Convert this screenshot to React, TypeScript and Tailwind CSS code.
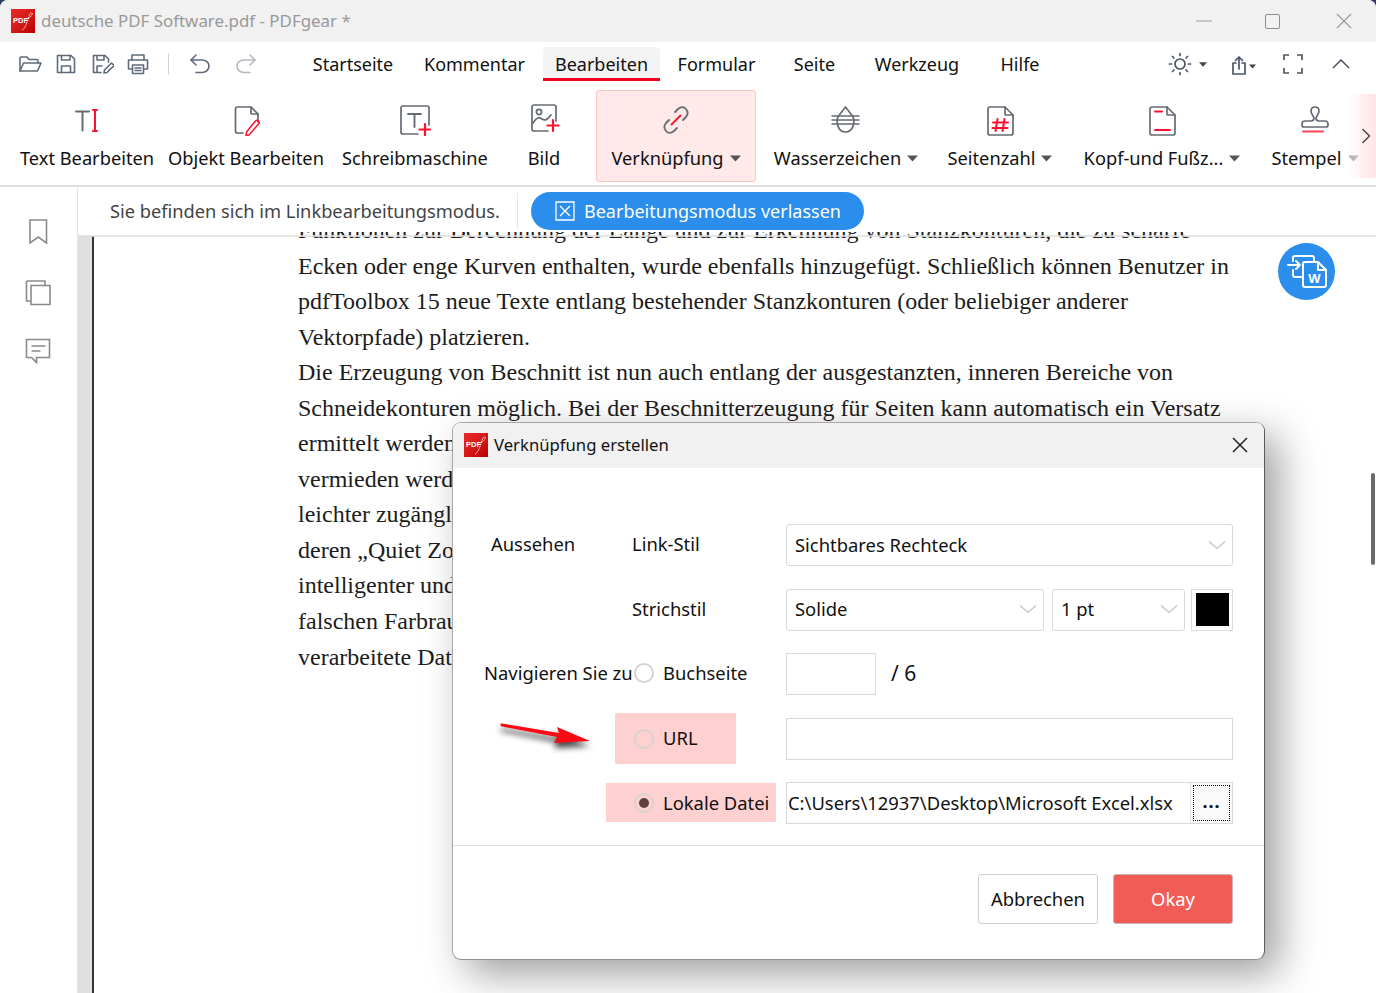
import React from "react";

const G = "#666b73";
const B = "#5f6b7a";
const R = "#ff1030";

function Logo() {
  return (
    <div className="relative w-[24px] h-[24px] shrink-0 bg-gradient-to-br from-[#ee2a2a] to-[#bb0000] overflow-hidden">
      <span className="absolute left-[2px] top-[7px] text-[7.500px] leading-[9px] font-bold text-white font-['Liberation_Sans',sans-serif]">PDF</span>
      <svg className="absolute inset-0" width="24" height="24" viewBox="0 0 24 24" fill="none" stroke="#fff" strokeWidth="0.8">
        <path d="M11 21C14 20 16 14 18 7c.6-2 2-4 3-3s-1 4-3 5-4 1-5 1" strokeDasharray="2 0.6" />
      </svg>
    </div>
  );
}

function Caret({ color = "#555", w = 11 }: { color?: string; w?: number }) {
  return (
    <svg width={w} height="7" viewBox="0 0 11 7" className="shrink-0">
      <path d="M0 0.5h11L5.5 6.5z" fill={color} />
    </svg>
  );
}

function Tool({ children, w = 24 }: { children: React.ReactNode; w?: number }) {
  return (
    <svg width={w} height="24" viewBox={`0 0 ${w} 24`} fill="none" stroke={B} strokeWidth="1.6" strokeLinejoin="round" strokeLinecap="round" className="shrink-0">
      {children}
    </svg>
  );
}

function RibbonIcon({ children }: { children: React.ReactNode }) {
  return (
    <svg width="32" height="32" viewBox="0 0 32 32" fill="none" stroke={G} strokeWidth="1.7" strokeLinejoin="round" strokeLinecap="round" className="shrink-0">
      {children}
    </svg>
  );
}

const icons = {
  text: (
    <>
      <path d="M5 7.500h13M11.500 7.500v19" strokeWidth="2" />
      <path d="M24 6v21M22 6h4M22 27h4" stroke={R} strokeWidth="2" />
    </>
  ),
  object: (
    <>
      <path d="M13 29H7.500a2 2 0 0 1-2-2V5a2 2 0 0 1 2-2H21l7 7v8" />
      <path d="M21 3v6a1 1 0 0 0 1 1h6" />
      <path d="M19 31l-3 .5.5-3.500 9-11c1-1 2-1 3 0s1 2 0 3z" stroke={R} strokeWidth="1.500" />
    </>
  ),
  type: (
    <>
      <path d="M19 30H4a2 2 0 0 1-2-2V4a2 2 0 0 1 2-2h24a2 2 0 0 1 2 2v17" />
      <path d="M9 10h13M15.500 10v13" strokeWidth="1.900" />
      <path d="M26 20v11M20.500 25.500H31" stroke={R} strokeWidth="2.200" />
    </>
  ),
  image: (
    <>
      <path d="M20 27H6a2 2 0 0 1-2-2V3a2 2 0 0 1 2-2h20a2 2 0 0 1 2 2v14" />
      <circle cx="11" cy="8" r="2.600" />
      <path d="M5 19c4-6 6-6 9-4s5 1 9-4" />
      <path d="M25 16v11M19.500 21.500h11" stroke={R} strokeWidth="2.200" />
    </>
  ),
  link: (
    <>
      <path d="M15 8l3-3c3-2.600 6-2.400 8 0s2.400 5 0 8l-3 3" strokeWidth="1.800" />
      <path d="M17 24l-3 3c-3 2.600-6 2.400-8 0s-2.400-5 0-8l3-3" strokeWidth="1.800" />
      <path d="M11.500 20.500l9-9" stroke={R} strokeWidth="1.800" />
    </>
  ),
  water: (
    <>
      <path d="M2 12h27M2 16h27M2 20h27" strokeWidth="1.500" />
      <path d="M15.500 3l-7 9c-3 5-1 16 7 16s10-11 7-16z" strokeWidth="1.700" />
    </>
  ),
  pagenum: (
    <>
      <path d="M6 3h15l8 8v18a2 2 0 0 1-2 2H6a2 2 0 0 1-2-2V5a2 2 0 0 1 2-2z" />
      <path d="M21 3v7a1 1 0 0 0 1 1h7" />
      <path d="M13.500 15l-2 12M20.500 15l-2 12M9 18.500h15M8.500 24h15" stroke={R} strokeWidth="2" />
    </>
  ),
  header: (
    <>
      <path d="M6 3h15l8 8v18a2 2 0 0 1-2 2H6a2 2 0 0 1-2-2V5a2 2 0 0 1 2-2z" />
      <path d="M21 3v7a1 1 0 0 0 1 1h7" />
      <path d="M9 7.500h7M9 26h15" stroke={R} strokeWidth="2" />
    </>
  ),
  stamp: (
    <>
      <path d="M3 20c0-2 1-3 3-3h6c2 0 3-1 3-3-1-3-3-4-3-7 0-3 2-4 4-4s4 1 4 4c0 3-2 4-3 7 0 2 1 3 3 3h6c2 0 3 1 3 3v1c0 1-1 2-2 2H5c-1 0-2-1-2-2z" />
      <path d="M4 27.500h20" stroke={R} strokeWidth="2" opacity="0.8" />
    </>
  ),
};

type RibbonItem = { label: string; w: string; icon: React.ReactNode; caret?: boolean; faint?: boolean };

function RibbonButton({ item }: { item: RibbonItem }) {
  return (
    <div className={`${item.w} h-[92px] shrink-0 flex flex-col items-center pt-[14px]`}>
      <RibbonIcon>{item.icon}</RibbonIcon>
      <div className="mt-[10px] h-[24px] flex items-center gap-[6px] whitespace-nowrap text-[18.250px] leading-[24px] text-[#111]">
        <span>{item.label}</span>
        {item.caret && <Caret color={item.faint ? "#aaa" : "#555"} />}
      </div>
    </div>
  );
}

function Chevron() {
  return (
    <svg width="18" height="10" viewBox="0 0 18 10" fill="none" stroke="#c4c4c4" strokeWidth="1.300" className="shrink-0">
      <path d="M1 1.500l8 7 8-7" />
    </svg>
  );
}

function Select({ label, className }: { label: string; className: string }) {
  return (
    <div className={`${className} h-[42px] border-[1.5px] border-[#d9d9d9] rounded-[3px] flex items-center justify-between pl-[8px] pr-[6px] text-[#111]`}>
      <span>{label}</span>
      <Chevron />
    </div>
  );
}

function Radio({ checked }: { checked?: boolean }) {
  return (
    <div className="relative w-[20px] h-[20px] rounded-full border-2 border-[#d9d2d2] flex items-center justify-center shrink-0">
      {checked && <div className="w-[10px] h-[10px] rounded-full bg-[#5e4040]" />}
    </div>
  );
}

const menu = [
  ["Startseite", "w-[120px]"],
  ["Kommentar", "w-[123px] mr-[7px]"],
];
const menu2 = [
  ["Formular", "w-[113px]"],
  ["Seite", "w-[83px]"],
  ["Werkzeug", "w-[122px]"],
  ["Hilfe", "w-[84px]"],
];

const lines = [
  "Funktionen zur Berechnung der Länge und zur Erkennung von Stanzkonturen, die zu scharfe",
  "Ecken oder enge Kurven enthalten, wurde ebenfalls hinzugefügt. Schließlich können Benutzer in",
  "pdfToolbox 15 neue Texte entlang bestehender Stanzkonturen (oder beliebiger anderer",
  "Vektorpfade) platzieren.",
  "Die Erzeugung von Beschnitt ist nun auch entlang der ausgestanzten, inneren Bereiche von",
  "Schneidekonturen möglich. Bei der Beschnitterzeugung für Seiten kann automatisch ein Versatz",
  "ermittelt werden",
  "vermieden werden",
  "leichter zugänglich",
  "deren „Quiet Zone",
  "intelligenter und",
  "falschen Farbraum",
  "verarbeitete Daten",
];

export default function App() {
  const items: RibbonItem[] = [
    { label: "Text Bearbeiten", w: "w-[154px]", icon: icons.text },
    { label: "Objekt Bearbeiten", w: "w-[164px]", icon: icons.object },
    { label: "Schreibmaschine", w: "w-[174px]", icon: icons.type },
    { label: "Bild", w: "w-[84px]", icon: icons.image },
  ];
  const items2: RibbonItem[] = [
    { label: "Wasserzeichen", w: "w-[180px]", icon: icons.water, caret: true },
    { label: "Seitenzahl", w: "w-[128px]", icon: icons.pagenum, caret: true },
    { label: "Kopf-und Fußz...", w: "w-[196px]", icon: icons.header, caret: true },
    { label: "Stempel", w: "w-[110px]", icon: icons.stamp, caret: true, faint: true },
  ];

  return (
    <div className="w-[1376px] h-[993px] bg-[#2d3a63] overflow-hidden">
      <div className="relative w-[1376px] h-[993px] bg-white rounded-t-[8px] overflow-hidden flex flex-col font-['Noto_Sans',sans-serif] text-[18px]">
        {/* title bar */}
        <div className="h-[42px] shrink-0 bg-[#f1f1f1] flex items-center pl-[11px]">
          <Logo />
          <span className="ml-[6px] text-[#999] text-[16.900px] whitespace-nowrap">deutsche PDF Software.pdf - PDFgear *</span>
          <div className="ml-auto flex items-center pr-[24px]">
            <svg width="16" height="2" className="mr-[53px]"><path d="M0 1h16" stroke="#aaa" strokeWidth="1.200" /></svg>
            <div className="w-[15px] h-[15px] border-[1.5px] border-[#8e8e8e] rounded-[2px] mr-[56px]" />
            <svg width="16" height="16" viewBox="0 0 16 16" stroke="#9a9a9a" strokeWidth="1.200"><path d="M1 1l14 14M15 1L1 15" /></svg>
          </div>
        </div>

        {/* menu row */}
        <div className="h-[44px] shrink-0 flex items-center">
          <div className="w-[293px] shrink-0 flex items-center pl-[18px] h-full">
            <div className="w-[36px]">
              <Tool>
                <path d="M2 19V6a1 1 0 0 1 1-1h6l2 2.500h8a1 1 0 0 1 1 1V11" />
                <path d="M2 19l3.500-8H23l-3.500 8z" />
              </Tool>
            </div>
            <div className="w-[36px]">
              <Tool>
                <path d="M3.500 3.500H17l3.500 3.500v13.500h-17z" />
                <path d="M7.500 3.500V8h8.500V3.500M7.500 20.500V14H16.500v6.500" />
              </Tool>
            </div>
            <div className="w-[36px]">
              <Tool>
                <path d="M11 20.500H3.500v-17H15l3.500 3.500v3" />
                <path d="M7 3.500V8h7V3.500M7 20V14h5" />
                <path d="M14 21l.5-3 7-7 2.500 2.500-7 7z" />
              </Tool>
            </div>
            <div className="w-[29px]">
              <Tool>
                <path d="M6 8V3h12v5" />
                <path d="M6 17H2.500V8h19v9H18" />
                <path d="M6.500 13h11v8.500h-11zM9 16h6M9 18.500h6" />
              </Tool>
            </div>
            <div className="w-[1px] h-[22px] bg-[#d4d4d4] ml-[13px] mr-[19px]" />
            <div className="w-[46px]">
              <Tool>
                <path d="M8 3L3 8l5 5" />
                <path d="M3 8h11c4 0 7 2.500 7 6s-3 6.500-7 6.500H8" />
              </Tool>
            </div>
            <svg width="24" height="24" viewBox="0 0 24 24" fill="none" stroke="#b4b8bf" strokeWidth="1.600" strokeLinecap="round" strokeLinejoin="round">
              <path d="M16 3l5 5-5 5" />
              <path d="M21 8H10c-4 0-7 2.500-7 6s3 6.500 7 6.500h6" />
            </svg>
          </div>
          {menu.map(([t, w]) => (
            <div key={t} className={`${w} text-center text-[#111] whitespace-nowrap`}>{t}</div>
          ))}
          <div className="relative w-[117px] h-[34px] pt-[3px] bg-[#f3f3f3] rounded-t-[5px] border-b-[3px] border-[#f5001e] flex items-center justify-center text-[#111]">
            Bearbeiten
          </div>
          {menu2.map(([t, w]) => (
            <div key={t} className={`${w} text-center text-[#111] whitespace-nowrap`}>{t}</div>
          ))}
          <div className="flex items-center ml-[106px]">
            <svg width="24" height="24" viewBox="0 0 24 24" fill="none" stroke="#4b5563" strokeWidth="1.700" strokeLinecap="round">
              <circle cx="12" cy="12" r="5" />
              <path d="M12 1.500v2M12 20.500v2M1.500 12h2M20.500 12h2M4.500 4.500l1.500 1.500M18 18l1.500 1.500M4.500 19.500L6 18M18 6l1.500-1.500" />
            </svg>
            <div className="ml-[7px]"><Caret color="#444" w={8} /></div>
            <svg className="ml-[24px] mt-[2px]" width="17" height="24" viewBox="0 0 17 24" fill="none" stroke="#4b5563" strokeWidth="1.700" strokeLinecap="round" strokeLinejoin="round">
              <path d="M5 10H2v11h12V10h-3M8 16V4M4.500 7.500L8 4l3.500 3.500" />
            </svg>
            <div className="ml-[1px] mt-[4px]"><Caret color="#444" w={7} /></div>
            <svg className="ml-[27px]" width="20" height="20" viewBox="0 0 20 20" fill="none" stroke="#4b5563" strokeWidth="1.700">
              <path d="M1 6V1h5M14 1h5v5M1 14v5h5M14 19h5v-5" />
            </svg>
            <svg className="ml-[29px]" width="18" height="10" viewBox="0 0 18 10" fill="none" stroke="#4b5563" strokeWidth="1.500">
              <path d="M1 9l8-8 8 8" />
            </svg>
          </div>
        </div>

        {/* ribbon */}
        <div className="relative h-[101px] shrink-0 border-b-2 border-[#e0e0e0] flex pl-[10px] pt-[4px] overflow-hidden">
          {items.map((it) => <RibbonButton key={it.label} item={it} />)}
          <div className="ml-[10px] w-[160px] h-[92px] shrink-0 bg-[#ffe9e9] border-[1.5px] border-[#ffc4c4] rounded-[3px] flex flex-col items-center pt-[13px]">
            <RibbonIcon>{icons.link}</RibbonIcon>
            <div className="mt-[10px] h-[24px] flex items-center gap-[6px] whitespace-nowrap text-[18.250px] text-[#111]">
              <span>Verknüpfung</span>
              <Caret />
            </div>
          </div>
          {items2.map((it) => <RibbonButton key={it.label} item={it} />)}
          <div className="absolute right-0 top-[8px] h-[84px] w-[28px] bg-gradient-to-r from-[#ffe4e400] to-[#ffe4e4] flex items-center justify-end pr-[5px]">
            <svg width="10" height="16" viewBox="0 0 10 16" fill="none" stroke="#444" strokeWidth="1.400"><path d="M1.500 1l7 7-7 7" /></svg>
          </div>
        </div>

        {/* body */}
        <div className="flex-1 flex min-h-0">
          <div className="w-[78px] shrink-0 border-r border-[#e4e4e4] flex flex-col items-center pt-[30px] gap-[29.500px]">
            <svg width="30" height="30" viewBox="0 0 30 30" fill="none" stroke="#8a8a8a" strokeWidth="1.600" className="-ml-[2px]">
              <path d="M7 3h16.500v23L15.250 20 7 26z" />
            </svg>
            <svg width="30" height="30" viewBox="0 0 30 30" fill="none" stroke="#8a8a8a" strokeWidth="1.600" className="-ml-[2px]">
              <path d="M8 8.500h19v19H8z" />
              <path d="M8 24H3.500V5a1 1 0 0 1 1-1H22v4.500" />
            </svg>
            <svg width="30" height="30" viewBox="0 0 30 30" fill="none" stroke="#8a8a8a" strokeWidth="1.600" className="-ml-[2px]">
              <path d="M3.500 3.500h23v18H13.500v5l-5-5h-5z" />
              <path d="M8.500 10h14M8.500 15h9" />
            </svg>
          </div>
          <div className="flex-1 flex flex-col min-w-0">
            <div className="h-[45px] shrink-0 flex items-center pl-[32px] pt-[3px] bg-white">
              <span className="text-[#444] text-[18.250px] whitespace-nowrap">Sie befinden sich im Linkbearbeitungsmodus.</span>
              <div className="w-[1px] h-[36px] bg-[#e6e6e6] ml-[17px] mr-[13px]" />
              <div className="w-[333px] h-[38px] rounded-full bg-[#2b8eec] flex items-center pl-[24px] gap-[9px] text-white whitespace-nowrap">
                <svg width="20" height="20" viewBox="0 0 20 20" fill="none" stroke="#fff" strokeWidth="1.300">
                  <path d="M1 1h18v18H1zM5 5l10 10M15 5L5 15" />
                </svg>
                <span>Bearbeitungsmodus verlassen</span>
              </div>
            </div>
            <div className="relative flex-1 flex min-h-0 overflow-hidden bg-white">
              <div className="w-[14px] mt-[4px] shrink-0 bg-[#e0e0e0]" />
              <div className="w-[2px] mt-[4px] shrink-0 bg-[#333]" />
              <div className="flex-1 pl-[204px] -mt-[19px] font-['Liberation_Serif',serif] text-[24px] leading-[35.550px] text-[#1c1c1c] whitespace-nowrap">
                {lines.map((l) => <div key={l}>{l}</div>)}
              </div>
              <div className="absolute left-0 right-0 top-[3px] h-[2px] bg-[#e0e0e0]/80" />
              <div className="absolute right-[41px] top-[11px] w-[57px] h-[57px] rounded-full bg-[#2b8eec]">
                <svg width="57" height="57" viewBox="0 0 57 57" fill="none" stroke="#fff" strokeWidth="2" strokeLinecap="round" strokeLinejoin="round">
                  <path d="M15 18v-3a2 2 0 0 1 2-2h17a2 2 0 0 1 2 2v3" />
                  <path d="M10 22h12M18 18l4 4-4 4" />
                  <path d="M15 27v5a2 2 0 0 0 2 2h7" />
                  <path d="M27 19h13l8 8v15a2 2 0 0 1-2 2H27a2 2 0 0 1-2-2V21a2 2 0 0 1 2-2z" fill="#2b8eec" />
                  <path d="M40 19v8h8" />
                  <text x="36.500" y="40" textAnchor="middle" fontSize="13" fontWeight="700" fill="#fff" stroke="none" fontFamily="Liberation Sans, sans-serif">W</text>
                </svg>
              </div>
              <div className="absolute right-[1px] top-[241px] w-[4px] h-[92px] rounded-full bg-[#6b6b6b]" />
            </div>
          </div>
        </div>

        {/* dialog */}
        <div className="absolute left-[452px] top-[422px] w-[813px] h-[538px] bg-white rounded-[9px] border-[1.5px] border-[#a8a8a8] border-r-[#5a5a5a] border-b-[#909090] overflow-visible shadow-[14px_14px_40px_rgba(0,0,0,0.38)] text-[#111]">
          <div className="h-[45px] pb-[2px] bg-[#f1f1f1] rounded-t-[8px] flex items-center pl-[11px] pr-[16px]">
            <Logo />
            <span className="ml-[6px] text-[16.700px]">Verknüpfung erstellen</span>
            <svg className="ml-auto" width="16" height="16" viewBox="0 0 16 16" stroke="#222" strokeWidth="1.500"><path d="M1 1l14 14M15 1L1 15" /></svg>
          </div>
          <div className="pt-[56px] pr-[31px] grid grid-cols-[179px_154px_447px] grid-rows-[42px_42px_42px_42px_42px] gap-y-[22.500px] items-center text-[18.400px]">
            <div className="pl-[38px] pb-[2px]">Aussehen</div>
            <div className="pb-[2px]">Link-Stil</div>
            <Select label="Sichtbares Rechteck" className="w-full" />

            <div />
            <div className="pb-[2px]">Strichstil</div>
            <div className="flex gap-[8px] items-center">
              <Select label="Solide" className="w-[258px] pb-[2px]" />
              <Select label="1 pt" className="w-[133px] pb-[2px]" />
              <div className="w-[42px] h-[42px] ml-[-2px] border-[1.5px] border-[#dcdcdc] p-[3.500px]">
                <div className="w-full h-full bg-black" />
              </div>
            </div>

            <div className="pl-[31px] pb-[2px] whitespace-nowrap">Navigieren Sie zu</div>
            <div className="flex items-center pl-[2px] gap-[9px] pb-[2px]"><Radio /><span>Buchseite</span></div>
            <div className="flex items-center gap-[15px]">
              <div className="w-[90px] h-[42px] border-[1.5px] border-[#d9d9d9]" />
              <span className="text-[21px]">/ 6</span>
            </div>

            <div className="relative h-full">
              <svg className="absolute left-[44px] top-[-2px] overflow-visible" width="100" height="36" viewBox="0 0 100 36">
                <g className="drop-shadow-[0_5px_3px_rgba(0,0,0,0.75)]">
                  <path d="M5 7.500l57 9.500-2-6 33 14-36 2 3-6-55-10.500c-2-.5-2-3.500 0-3z" fill="#fa0a14" />
                </g>
              </svg>
            </div>
            <div className="relative h-full flex items-center pl-[2px] gap-[9px]">
              <div className="absolute left-[-17px] top-[-5px] w-[121px] h-[51px] bg-[#ffd0d0]" />
              <div className="relative"><Radio /></div>
              <span className="relative -mt-[2px]">URL</span>
            </div>
            <div className="h-[42px] border-[1.5px] border-[#d9d9d9]" />

            <div />
            <div className="relative h-full flex items-center pl-[2px] gap-[9px] whitespace-nowrap">
              <div className="absolute left-[-26px] top-[1px] w-[170px] h-[39px] bg-[#ffd0d0]" />
              <div className="relative"><Radio checked /></div>
              <span className="relative">Lokale Datei</span>
            </div>
            <div className="h-[42px] border-[1.5px] border-[#d9d9d9] flex items-center">
              <span className="pl-[1px] flex-1 whitespace-nowrap">C:\Users\12937\Desktop\Microsoft Excel.xlsx</span>
              <div className="w-[42px] h-full shrink-0 border-l-[1.5px] border-[#e0e0e0] bg-[#fafafa] p-[2px]">
                <div className="w-full h-full border border-dotted border-black flex items-center justify-center font-bold leading-none tracking-[1px] text-[18px] pb-[5px]">...</div>
              </div>
            </div>
          </div>
          <div className="mt-[21px] border-t-[1.5px] border-[#dedede] flex justify-end gap-[15px] pr-[31px] pt-[28px]">
            <div className="w-[120px] h-[50px] border-[1.5px] border-[#cfcfcf] rounded-[3px] flex items-center justify-center text-[18.400px]">Abbrechen</div>
            <div className="w-[120px] h-[50px] border-[1.5px] border-[#c9b5b5] rounded-[3px] bg-[#f25c56] text-white flex items-center justify-center text-[18.400px]">Okay</div>
          </div>
        </div>
      </div>
    </div>
  );
}
